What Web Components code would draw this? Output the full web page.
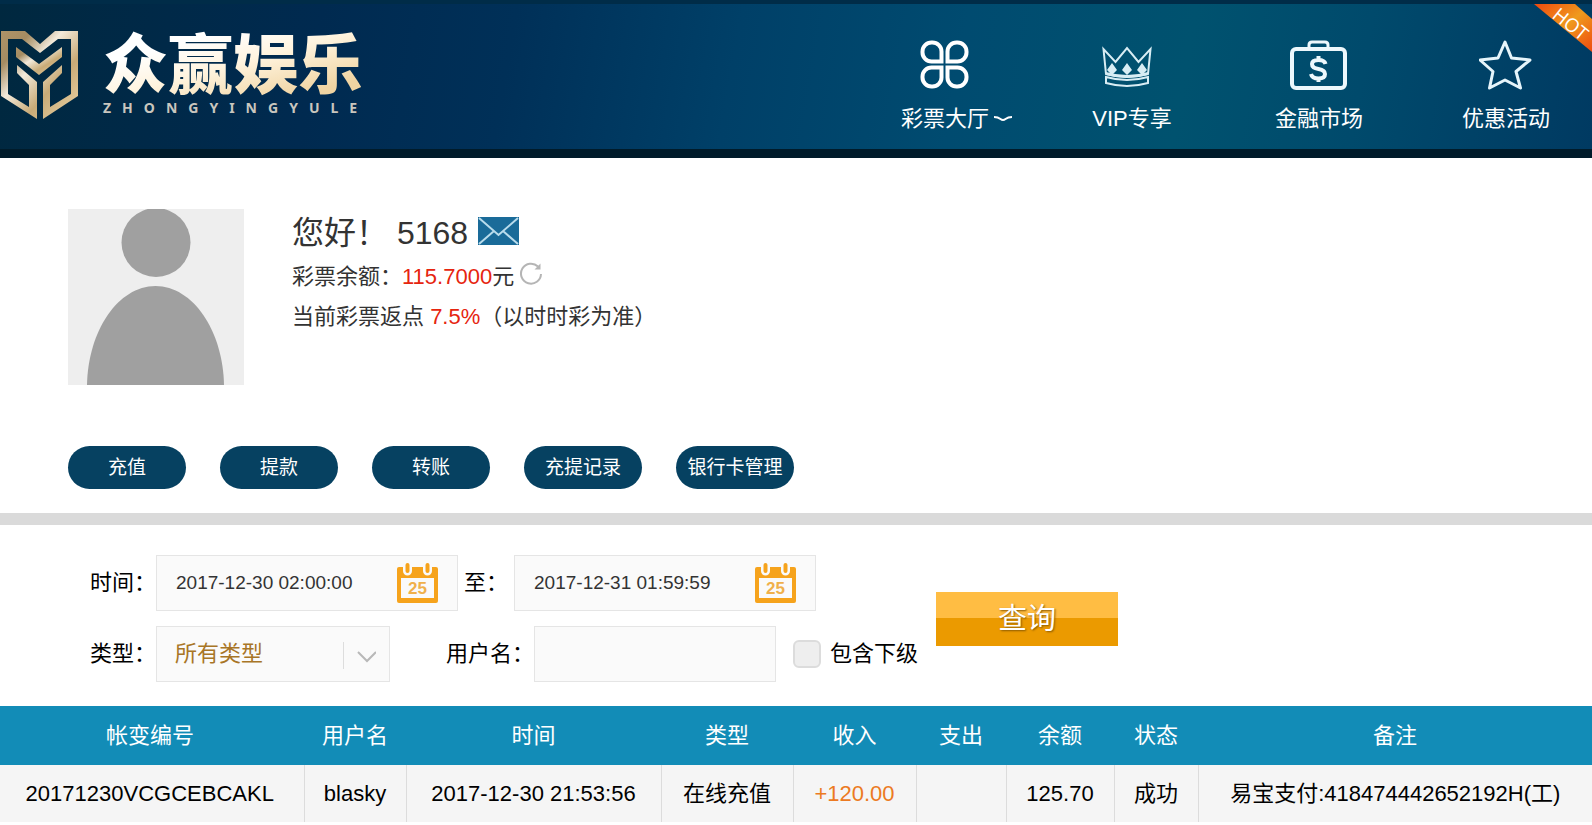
<!DOCTYPE html>
<html lang="zh-CN">
<head>
<meta charset="utf-8">
<title>众赢娱乐</title>
<style>
  body {
    margin: 0;
    background: #fff;
    color: #000;
    font: 22px/32px "Liberation Sans", "Noto Sans CJK SC", sans-serif;
  }
</style>
</head>
<body>
<site-header>
  <nav-item label="彩票大厅" more>
    <svg width="50" height="50" viewBox="0 0 50 50" fill="none" stroke="#fff" stroke-width="4">
      <path d="M21.500 21.500H11.500A9 9 0 0 1 2.500 12.500V11.500A9 9 0 0 1 11.500 2.500H12.500A9 9 0 0 1 21.500 11.500z"/>
      <path d="M27.500 21.500H37.500A9 9 0 0 0 46.500 12.500V11.500A9 9 0 0 0 37.500 2.500H36.500A9 9 0 0 0 27.500 11.500z"/>
      <path d="M21.500 27.500H11.500A9 9 0 0 0 2.500 36.500V37.500A9 9 0 0 0 11.500 46.500H12.500A9 9 0 0 0 21.500 37.500z"/>
      <path d="M27.500 27.500H37.500A9 9 0 0 1 46.500 36.500V37.500A9 9 0 0 1 37.500 46.500H36.500A9 9 0 0 1 27.500 37.500z"/>
    </svg>
  </nav-item>
  <nav-item label="VIP专享">
    <svg width="60" height="48" viewBox="0 0 60 48" fill="none" stroke="#d8edf4" stroke-width="2">
      <path d="M4 33L1.500 8l12 13L25 7l11.500 14 12-13L46 33q-21 6-42 0z"/>
      <path d="M4 36q21 6 42 0v6q-21 6-42 0z"/>
      <g fill="#d8edf4" stroke="none">
        <path d="M10 22l5 7-5 5-5-5zM25 22l5 7-5 5-5-5zM40 22l5 7-5 5-5-5z"/>
        <path d="M4 31q21 6 42 0v3q-21 6-42 0z"/>
      </g>
    </svg>
  </nav-item>
  <nav-item label="金融市场">
    <svg width="58" height="50" viewBox="0 0 58 50" fill="none" stroke="#edf8fc" stroke-width="4">
      <rect x="2" y="9" width="53" height="39" rx="4"/>
      <path d="M19 8V5q0-3 3-3h13q3 0 3 3v3" stroke-width="3"/>
      <path d="M35.500 24q-1-4-7-4-6.500 0-6.500 4 0 4 6.500 5t6.500 5q0 4.500-6.500 4.500T21 34M28.500 16v4M28.500 37v5"/>
    </svg>
  </nav-item>
  <nav-item label="优惠活动">
    <svg width="54" height="50" viewBox="0 0 54 50" fill="none" stroke="#e6f5fb" stroke-width="3" stroke-linejoin="round">
      <path d="M26 2l6.500 16L51 20 37 31.500 41.500 48 26 40 10.500 48 14 31.500 1 20l18-2z"/>
    </svg>
  </nav-item>
</site-header>
<user-profile name="5168" balance="115.7000" rebate="7.5%">
  <pill-button>充值</pill-button>
  <pill-button>提款</pill-button>
  <pill-button>转账</pill-button>
  <pill-button>充提记录</pill-button>
  <pill-button>银行卡管理</pill-button>
</user-profile>
<record-filter></record-filter>
<record-table></record-table>

<script>
class SiteHeader extends HTMLElement {
  constructor() {
    super();

    this.attachShadow({ mode: 'open' }).innerHTML = `
      <style>
        :host {
          display: block;
          position: relative;
          overflow: hidden;
          border-top: 4px solid #002c48;
          border-bottom: 9px solid #001b2a;
          background: linear-gradient(100deg, #00283f 0%, #002a50 20%, #003058 32%, #004068 46%, #004b70 60%, #00526f 74%, #004a6c 85%, #003a62 100%);
        }

        header {
          display: flex;
          justify-content: space-between;
          height: 145px;
        }

        .logo {
          display: flex;
          gap: 24px;
          padding-top: 25px;
        }

        /* the padding keeps the clipped background under the whole glyphs */
        .title {
          padding-bottom: 7px;
          font: 900 65px/62px "Noto Sans CJK SC", sans-serif;
          background: linear-gradient(165deg, #fff 25%, #fff4df 50%, #f0d4a2 85%);
          -webkit-background-clip: text;
          background-clip: text;
          color: transparent;
        }

        .latin {
          color: #c9c6be;
          font: bold 14px/20px "Noto Sans", sans-serif;
          letter-spacing: 11px;
        }

        nav {
          display: flex;
          gap: 15px;
        }

        .hot {
          position: absolute;
          top: 0;
          right: 0;
        }
      </style>
      <header>
        <div class="logo">
          <svg width="79" height="92" viewBox="0 0 79 92">
            <defs>
              <linearGradient id="gold" x1="0" y1="0" x2="1" y2="1">
                <stop offset="0" stop-color="#b09468"/>
                <stop offset=".2" stop-color="#a58c62"/>
                <stop offset=".4" stop-color="#f3eadb"/>
                <stop offset=".65" stop-color="#c9ab77"/>
                <stop offset="1" stop-color="#ecd5a8"/>
              </linearGradient>
            </defs>
            <g fill="url(#gold)">
              <path d="M1 2h24l15 13L55 2h23v65L43 90V53l19-17v8L50 56v22l21-13V10H58L40 24 22 10H8v55l21 13V56L17 44v-8l20 17v37L1 67z"/>
              <path d="M16 18l23 17 23-17v10L39 46 16 28z"/>
            </g>
          </svg>
          <div>
            <div class="title">众赢娱乐</div>
            <div class="latin">ZHONGYINGYULE</div>
          </div>
        </div>
        <nav><slot></slot></nav>
      </header>
      <svg class="hot" width="58" height="50" viewBox="0 0 58 50">
        <defs>
          <linearGradient id="ribbon" x1="0" y1="0" x2="1" y2="1">
            <stop offset="0" stop-color="#f0480e"/>
            <stop offset=".5" stop-color="#ef9a1d"/>
            <stop offset="1" stop-color="#ee4a10"/>
          </linearGradient>
        </defs>
        <path d="M0 0h41l17 15v33z" fill="url(#ribbon)"/>
        <text transform="translate(17 13) rotate(39)" fill="#fff" font-family="Open Sans, sans-serif" font-size="19">HOT</text>
      </svg>
    `;
  }
}

class NavItem extends HTMLElement {
  connectedCallback() {
    const arrow = this.hasAttribute('more')
      ? '<svg width="20" height="8" viewBox="0 0 20 8" fill="none" stroke="#fff" stroke-width="2"><path d="M1 2Q5 2 7.500 4T12.500 4 19 2"/></svg>'
      : '';

    this.attachShadow({ mode: 'open' }).innerHTML = `
      <style>
        :host {
          display: block;
          width: 172px;
        }

        a {
          display: flex;
          flex-direction: column;
          align-items: center;
          padding-top: 36px;
          color: #fff;
          text-decoration: none;
        }

        .icon {
          display: flex;
          align-items: center;
          height: 50px;
          margin-bottom: 13px;
        }

        .label {
          display: flex;
          align-items: center;
          gap: 4px;
        }

        /* the arrow hangs beside the centred label */
        .label svg {
          margin-right: -24px;
        }
      </style>
      <a href="#">
        <span class="icon"><slot></slot></span>
        <span class="label">${this.getAttribute('label')}${arrow}</span>
      </a>
    `;
  }
}

class PillButton extends HTMLElement {
  constructor() {
    super();

    this.attachShadow({ mode: 'open' }).innerHTML = `
      <style>
        :host {
          display: block;
        }

        button {
          width: 118px;
          height: 43px;
          padding: 0;
          border: 0;
          border-radius: 22px;
          background: #064161;
          color: #fff;
          font: inherit;
          font-size: 19px;
        }
      </style>
      <button type="button"><slot></slot></button>
    `;
  }
}

class UserProfile extends HTMLElement {
  connectedCallback() {
    this.attachShadow({ mode: 'open' }).innerHTML = `
      <style>
        :host {
          display: block;
          padding: 51px 68px 24px;
          border-bottom: 12px solid #dadada;
          color: #333;
        }

        .user {
          display: flex;
          gap: 48px;
        }

        .hello,
        .line {
          display: flex;
          align-items: center;
          white-space: pre;
        }

        .hello {
          height: 48px;
          gap: 10px;
          font-size: 32px;
        }

        .hello svg {
          margin-bottom: 4px;
        }

        .line {
          height: 40px;
        }

        .line button {
          display: flex;
          margin-left: 5px;
          padding: 0 0 6px;
          border: 0;
          background: none;
        }

        b {
          color: #e6250f;
          font-weight: normal;
        }

        .actions {
          display: flex;
          flex-wrap: wrap;
          gap: 34px;
          margin-top: 61px;
        }
      </style>
      <div class="user">
        <svg width="176" height="176" viewBox="0 0 176 176">
          <path fill="#eee" d="M0 0h176v176H0z"/>
          <circle cx="88" cy="33.500" r="34.500" fill="#a0a0a0"/>
          <path fill="#a0a0a0" d="M19 176C20 122 50 77 87.500 77S155 122 156 176z"/>
        </svg>
        <div>
          <div class="hello"><span>您好！ ${this.getAttribute('name')}</span><svg width="41" height="28" viewBox="0 0 41 28"><path fill="#1a6b99" d="M0 0h41v28H0z"/><path d="M1 1l19.500 17L40 1M1 27l15-13M40 27L25 14" fill="none" stroke="#b9dcec" stroke-width="2"/></svg></div>
          <div class="line">彩票余额：<b>${this.getAttribute('balance')}</b>元<button type="button" aria-label="刷新"><svg width="24" height="24" viewBox="0 0 24 24" fill="none" stroke="#b5b5b5" stroke-width="2"><path d="M22 12A10 10 0 1 1 19 4.500"/><path d="M21.500 1.500v6h-6z" fill="#b5b5b5" stroke="none"/></svg></button></div>
          <div class="line">当前彩票返点 <b>${this.getAttribute('rebate')}</b>（以时时彩为准）</div>
        </div>
      </div>
      <div class="actions"><slot></slot></div>
    `;
  }
}

class DateField extends HTMLElement {
  connectedCallback() {
    this.attachShadow({ mode: 'open' }).innerHTML = `
      <style>
        :host {
          display: block;
        }

        label {
          display: flex;
          align-items: center;
          gap: var(--label-gap, 6px);
        }

        .box {
          display: flex;
          align-items: center;
          box-sizing: border-box;
          width: 302px;
          height: 56px;
          padding: 0 19px;
          border: 1px solid #e5e5e5;
          background: #fafafa;
        }

        input {
          flex: 1;
          min-width: 0;
          padding: 0;
          border: 0;
          outline: 0;
          background: none;
          color: #333;
          font: inherit;
          font-size: 19px;
        }
      </style>
      <label>
        <slot></slot>
        <span class="box">
          <input type="text" value="${this.getAttribute('value')}">
          <svg width="41" height="42" viewBox="0 0 41 42">
            <rect fill="#f6a31c" y="5" width="41" height="36" rx="2"/>
            <path fill="#fafafa" d="M4 16h33v20H4z"/>
            <path d="M10.500 3v6M30.500 3v6" stroke="#fafafa" stroke-width="9" stroke-linecap="round"/>
            <path d="M10.500 3v6M30.500 3v6" stroke="#f6a31c" stroke-width="4" stroke-linecap="round"/>
            <text x="20.500" y="32" text-anchor="middle" fill="#f0b04a" font-family="Liberation Sans, sans-serif" font-weight="bold" font-size="17">25</text>
          </svg>
        </span>
      </label>
    `;
  }
}

class RecordFilter extends HTMLElement {
  constructor() {
    super();

    this.attachShadow({ mode: 'open' }).innerHTML = `
      <style>
        :host {
          display: block;
          padding: 30px 90px 24px;
        }

        form,
        .row,
        .check {
          display: flex;
          align-items: center;
        }

        form {
          gap: 18px;
        }

        .fields {
          display: grid;
          gap: 15px;
        }

        .row {
          white-space: nowrap;
        }

        .from {
          --label-gap: 0;
          margin-right: 6px;
        }

        .caption {
          width: 66px;
        }

        .select,
        .user {
          box-sizing: border-box;
          height: 56px;
          border: 1px solid #e5e5e5;
          background: #fafafa;
        }

        .select {
          display: flex;
          align-items: center;
          width: 234px;
          margin-right: 56px;
          padding-right: 13px;
        }

        select {
          flex: 1;
          min-width: 0;
          height: 54px;
          padding: 0 0 0 18px;
          border: 0;
          outline: 0;
          appearance: none;
          background: none;
          color: #a87526;
          font: inherit;
        }

        .user {
          width: 242px;
          margin-right: 17px;
          padding: 0 18px;
          outline: 0;
          font: inherit;
        }

        .check {
          gap: 9px;
        }

        .check input {
          box-sizing: border-box;
          width: 28px;
          height: 28px;
          margin: 0;
          appearance: none;
          border: 2px solid #dcdcdc;
          border-radius: 6px;
          background: #eee;
        }

        .search {
          width: 182px;
          height: 54px;
          padding: 0;
          border: 0;
          background: linear-gradient(#ffbd43 48%, #eb9a00 48%);
          color: #fff;
          font: inherit;
          font-size: 29px;
          text-shadow: 1px 1px 2px #8a5a00;
        }
      </style>
      <form>
        <div class="fields">
          <div class="row">
            <date-field class="from" value="2017-12-30 02:00:00">时间：</date-field>
            <date-field value="2017-12-31 01:59:59">至：</date-field>
          </div>
          <div class="row">
            <label class="caption" for="type">类型：</label>
            <span class="select">
              <select id="type"><option>所有类型</option></select>
              <svg width="34" height="30" viewBox="0 0 34 30" fill="none" stroke="#b8b8b8"><path d="M1.500 3v27" stroke="#ddd"/><path d="M16 13l9 9 9-9" stroke-width="2"/></svg>
            </span>
            <label for="user">用户名：</label>
            <input class="user" id="user" type="text">
            <label class="check"><input type="checkbox">包含下级</label>
          </div>
        </div>
        <button class="search" type="button">查询</button>
      </form>
    `;
  }
}

class RecordTable extends HTMLElement {
  constructor() {
    super();

    // column title, share of the width, value
    const columns = [
      ['帐变编号', 304, '20171230VCGCEBCAKL'],
      ['用户名', 102, 'blasky'],
      ['时间', 255, '2017-12-30 21:53:56'],
      ['类型', 132, '在线充值'],
      ['收入', 123, '<span class="income">+120.00</span>'],
      ['支出', 90, ''],
      ['余额', 108, '125.70'],
      ['状态', 84, '成功'],
      ['备注', 394, '易宝支付:418474442652192H(工)'],
    ];
    const total = columns.reduce((sum, column) => sum + column[1], 0);

    this.attachShadow({ mode: 'open' }).innerHTML = `
      <style>
        :host {
          display: block;
        }

        table {
          width: 100%;
          table-layout: fixed;
          border-collapse: collapse;
          text-align: center;
          white-space: nowrap;
        }

        th,
        td {
          padding: 0;
        }

        th:first-child,
        td:first-child {
          padding-right: 4px;
        }

        th {
          height: 59px;
          background: #128cb7;
          color: #fff;
          font-weight: normal;
        }

        td {
          height: 57px;
          background: #f5f5f5;
        }

        td + td {
          border-left: 1px solid #dcdcdc;
        }

        .income {
          color: #ec7a22;
        }
      </style>
      <table>
        <colgroup>${columns.map(column => `<col style="width: calc(100% * ${column[1]} / ${total})">`).join('')}</colgroup>
        <thead><tr>${columns.map(column => `<th>${column[0]}</th>`).join('')}</tr></thead>
        <tbody><tr>${columns.map(column => `<td>${column[2]}</td>`).join('')}</tr></tbody>
      </table>
    `;
  }
}

window.customElements.define('site-header', SiteHeader);
window.customElements.define('nav-item', NavItem);
window.customElements.define('pill-button', PillButton);
window.customElements.define('user-profile', UserProfile);
window.customElements.define('date-field', DateField);
window.customElements.define('record-filter', RecordFilter);
window.customElements.define('record-table', RecordTable);
</script>
</body>
</html>
